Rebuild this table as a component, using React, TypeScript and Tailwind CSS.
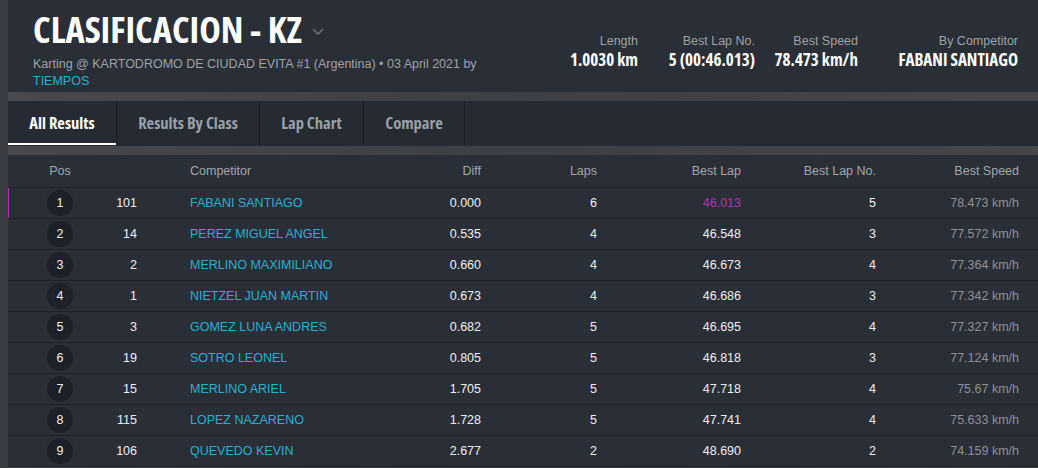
import React from "react";

const rows = [
  { pos: 1, no: "101", name: "FABANI SANTIAGO", diff: "0.000", laps: "6", best: "46.013", bestNo: "5", speed: "78.473 km/h" },
  { pos: 2, no: "14", name: "PEREZ MIGUEL ANGEL", diff: "0.535", laps: "4", best: "46.548", bestNo: "3", speed: "77.572 km/h" },
  { pos: 3, no: "2", name: "MERLINO MAXIMILIANO", diff: "0.660", laps: "4", best: "46.673", bestNo: "4", speed: "77.364 km/h" },
  { pos: 4, no: "1", name: "NIETZEL JUAN MARTIN", diff: "0.673", laps: "4", best: "46.686", bestNo: "3", speed: "77.342 km/h" },
  { pos: 5, no: "3", name: "GOMEZ LUNA ANDRES", diff: "0.682", laps: "5", best: "46.695", bestNo: "4", speed: "77.327 km/h" },
  { pos: 6, no: "19", name: "SOTRO LEONEL", diff: "0.805", laps: "5", best: "46.818", bestNo: "3", speed: "77.124 km/h" },
  { pos: 7, no: "15", name: "MERLINO ARIEL", diff: "1.705", laps: "5", best: "47.718", bestNo: "4", speed: "75.67 km/h" },
  { pos: 8, no: "115", name: "LOPEZ NAZARENO", diff: "1.728", laps: "5", best: "47.741", bestNo: "4", speed: "75.633 km/h" },
  { pos: 9, no: "106", name: "QUEVEDO KEVIN", diff: "2.677", laps: "2", best: "48.690", bestNo: "2", speed: "74.159 km/h" },
];

const cond = "font-['Open_Sans',sans-serif] [font-stretch:75%] font-bold";
const arial = "font-['Liberation_Sans',Arial,sans-serif]";
const grid = "grid grid-cols-[104px_78px_231px_60px_116px_144px_135px_143px]";

function Stat({ label, value, w }: { label: string; value: string; w: string }) {
  return (
    <div className={`${w} text-right`}>
      <div className={`${arial} text-[12.5px] leading-[17px] text-[#9ea2a8]`}>{label}</div>
      <div className={`${cond} text-[17px] leading-[20px] text-white`}>{value}</div>
    </div>
  );
}

export default function App() {
  const tabs = [
    { t: "All Results", w: "w-[109px]", active: true },
    { t: "Results By Class", w: "w-[143px]" },
    { t: "Lap Chart", w: "w-[104px]" },
    { t: "Compare", w: "w-[101px]" },
  ];
  return (
    <div className="w-[1038px] h-[468px] overflow-hidden bg-[#3a3c41] pl-2">
      <div className="h-full bg-gradient-to-r from-[#47494d] via-[#3c3f45] to-[#46474b] flex flex-col">
        {/* header */}
        <div className="h-[92px] shrink-0 bg-[#2a2e37] flex justify-between pl-[25px] pr-[20px]">
          <div className="pt-[7px]">
            <div className="flex items-center">
              <h1 className={`${cond} text-[36.5px] leading-[44px] text-white`}>CLASIFICACION - KZ</h1>
              <svg width="14" height="10" viewBox="0 0 14 10" className="ml-[9px] mt-[4px]">
                <path d="M2 3 L7 8 L12 3" stroke="#6b7078" strokeWidth="1.6" fill="none" />
              </svg>
            </div>
            <div className={`${arial} mt-[5px] text-[12.5px] leading-[17px] text-[#9ea2a8]`}>
              Karting @ KARTODROMO DE CIUDAD EVITA #1 (Argentina) • 03 April 2021 by
              <br />
              <span className="text-[#26b1d3]">TIEMPOS</span>
            </div>
          </div>
          <div className="flex pt-[33px]">
            <Stat label="Length" value="1.0030 km" w="w-[80px]" />
            <Stat label="Best Lap No." value="5 (00:46.013)" w="w-[117px]" />
            <Stat label="Best Speed" value="78.473 km/h" w="w-[103px]" />
            <Stat label="By Competitor" value="FABANI SANTIAGO" w="w-[160px]" />
          </div>
        </div>

        {/* tabs */}
        <div className="mt-[9px] h-[45px] shrink-0 bg-[#262a32] flex">
          {tabs.map((tab) => (
            <div
              key={tab.t}
              className={`${tab.w} relative flex items-center justify-center border-r border-[#1b1e24] ${cond} text-[16.5px] ${tab.active ? "text-white" : "text-[#9aa0a8]"}`}
            >
              {tab.t}
              {tab.active && <div className="absolute left-0 right-0 bottom-[1px] h-[2px] bg-white" />}
            </div>
          ))}
        </div>

        {/* table */}
        <div className="mt-[9px] bg-[#2a2e37]">
          <div className={`${grid} h-[33px] items-center border-b border-[#1e2128] ${arial} text-[12.5px] text-[#a3a6ab]`}>
            <div className="text-center">Pos</div>
            <div></div>
            <div>Competitor</div>
            <div className="text-right">Diff</div>
            <div className="text-right">Laps</div>
            <div className="text-right">Best Lap</div>
            <div className="text-right">Best Lap No.</div>
            <div className="text-right">Best Speed</div>
          </div>
          {rows.map((r, i) => (
            <div
              key={r.pos}
              className={`${grid} h-[31px] items-center border-b border-[#1e2128] ${arial} text-[12.5px] text-[#eef0f2] ${i === 0 ? "shadow-[inset_1px_0_0_#b12fb8]" : ""}`}
            >
              <div className="flex justify-center">
                <div className="w-[26px] h-[26px] rounded-full bg-[#1d2027] flex items-center justify-center">
                  {r.pos}
                </div>
              </div>
              <div className="text-right pr-[53px]">{r.no}</div>
              <div className="text-[#26b1d3]">{r.name}</div>
              <div className="text-right">{r.diff}</div>
              <div className="text-right">{r.laps}</div>
              <div className={`text-right ${i === 0 ? "text-[#b22fb6]" : ""}`}>{r.best}</div>
              <div className="text-right">{r.bestNo}</div>
              <div className="text-right text-[#8e9196]">{r.speed}</div>
            </div>
          ))}
        </div>
      </div>
    </div>
  );
}
